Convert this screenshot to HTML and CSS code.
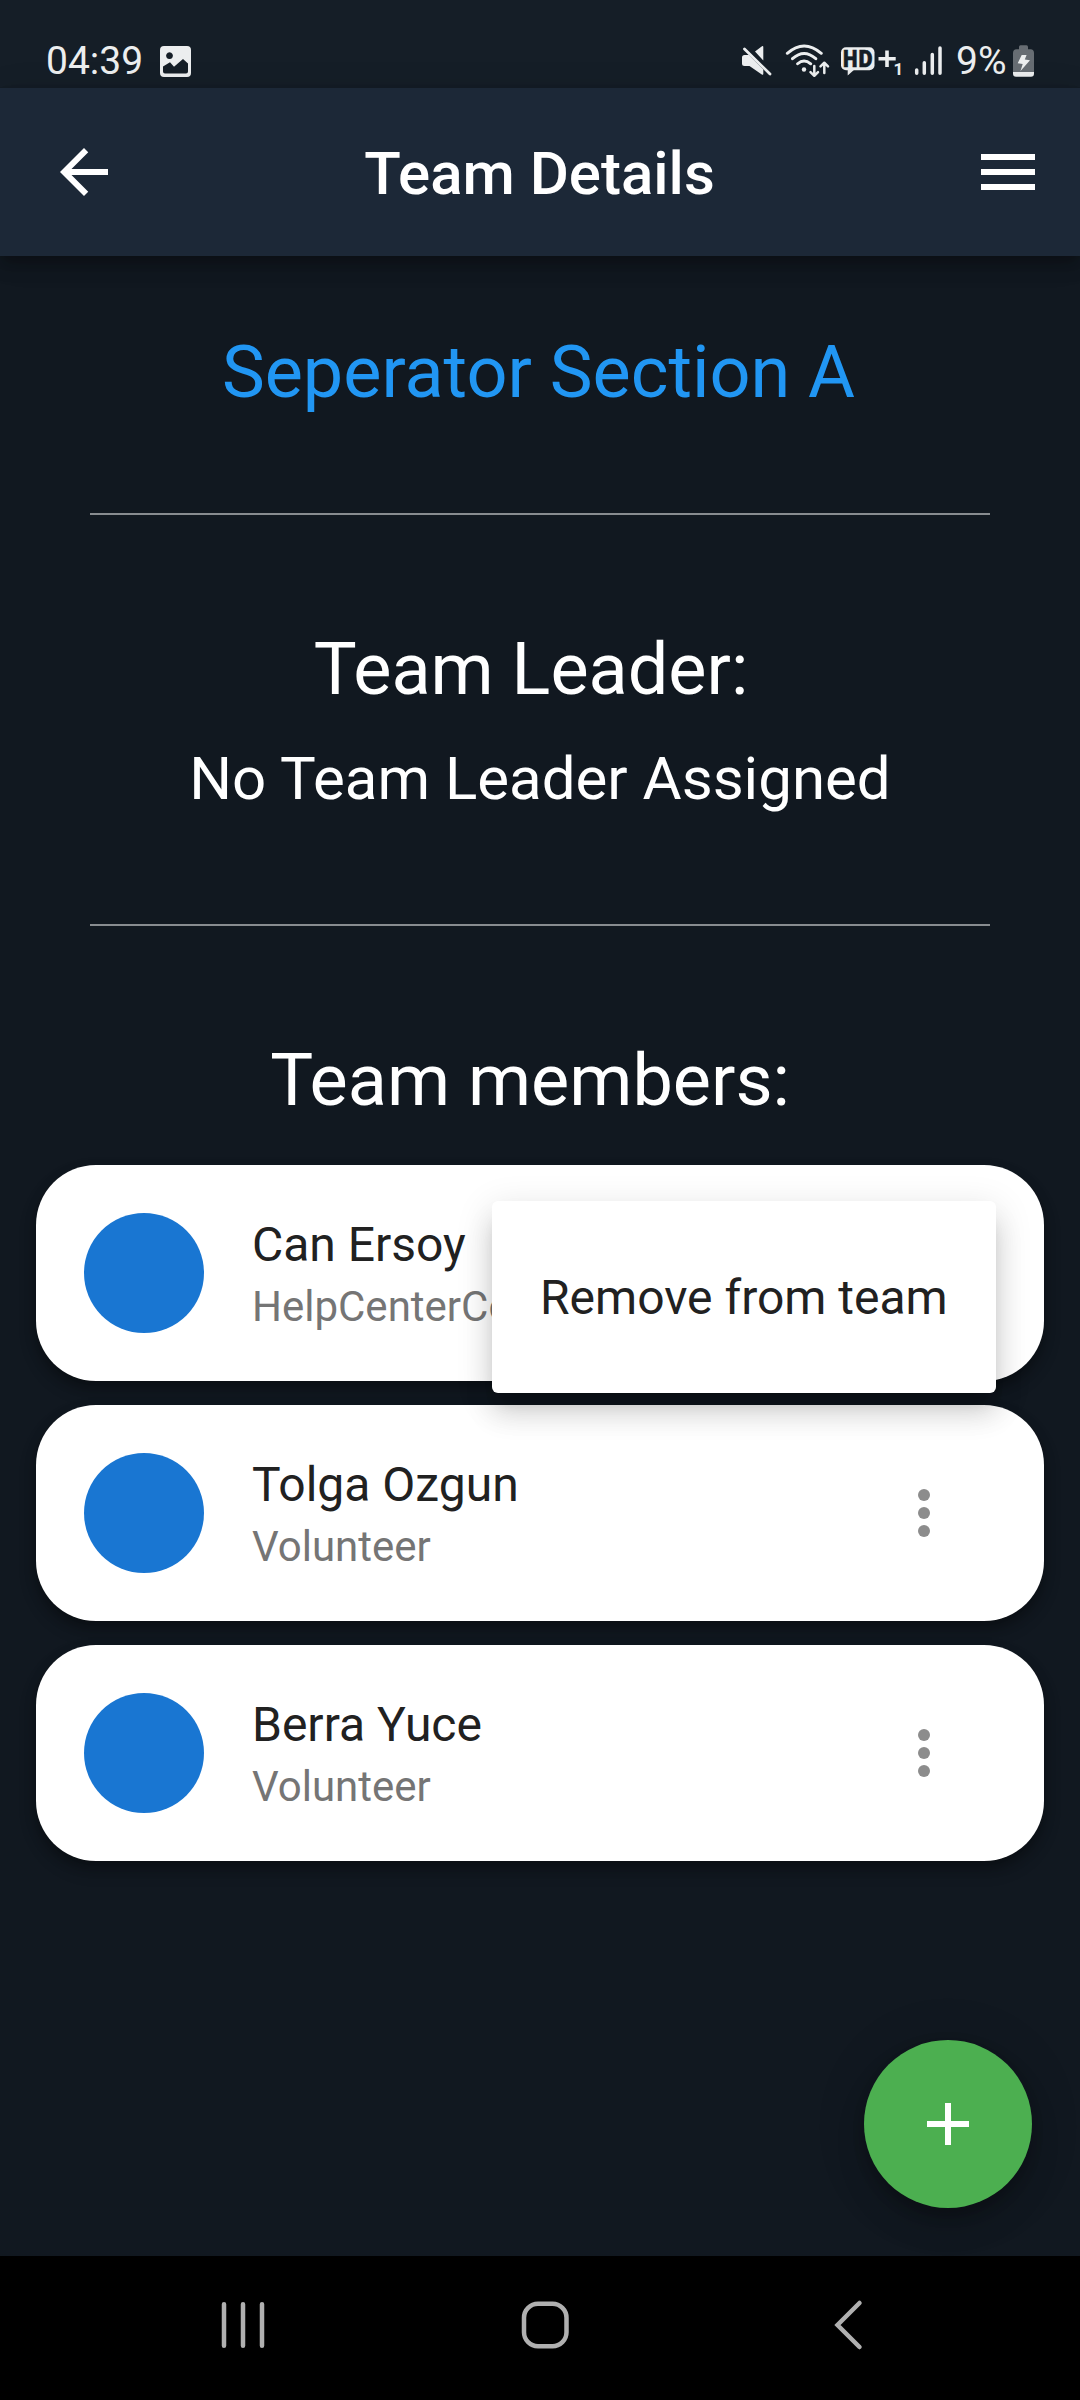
FILE: index.html
```html
<!DOCTYPE html>
<html lang="en">
<head>
<meta charset="utf-8">
<title>Team Details</title>
<link rel="stylesheet" href="styles.css">
</head>
<body>
<div class="screen">
  <div class="status-bar">
    <span class="clock">04:39</span>
    <svg class="picture" width="31" height="36" viewBox="0 0 31 36"><path fill="#eceeef" fill-rule="evenodd" d="M4 4H27a4 4 0 0 1 4 4V31a4 4 0 0 1-4 4H4a4 4 0 0 1-4-4V8a4 4 0 0 1 4-4ZM9.500 10.300a3.400 3.400 0 1 0 .01 0ZM3 24.500L10 20.300L14 24.700L23 17L28 21.500V29.500a2 2 0 0 1-2 2H5a2 2 0 0 1-2-2Z"/></svg>
    <div class="indicators">
      <svg width="34" height="36" viewBox="0 0 34 36"><path fill="#eceeef" d="M15 9.500L22 4.300q1.300-.6 1.300.8V18.500ZM2 15.500q0-2.500 2.500-2.500H8.800L23.300 27.500V31.700q0 1.700-1.500.7L9.500 24H4.500Q2 24 2 21.500Z"/><path stroke="#eceeef" stroke-width="2.800" stroke-linecap="round" d="M4.500 7L30 32"/></svg>
      <svg class="gap" width="46" height="36" viewBox="0 0 46 36" fill="none" stroke="#eceeef" stroke-width="2.900" stroke-linecap="round" stroke-linejoin="round"><path d="M3.300 11.300Q20 -3.500 37.300 11.300M8.500 16.700Q20 6.300 31.800 16.700M13.600 21.800Q20 16 26.700 21.800"/><circle cx="20" cy="27.500" r="2.200" fill="#eceeef" stroke="none"/><path stroke-width="2.500" d="M30.300 24V33.500M26.500 30.200L30.300 33.800L34 30.200M40.300 31V21M36.500 24.300L40.300 20.700L44 24.300"/></svg>
      <svg class="gap" width="62" height="36" viewBox="0 0 62 36"><rect x="1" y="5.300" width="33.500" height="23" rx="5" fill="#eceeef"/><path fill="#eceeef" d="M7.700 27V33.500L15 27ZM38.500 14.900H45.200V8.500H48.800V14.900H55.700V18.500H48.800V25H45.200V18.500H38.500Z"/><text class="hd" x="3" y="25.300" textLength="14.500" lengthAdjust="spacingAndGlyphs">H</text><text class="hd" x="18.500" y="25.300" textLength="14" lengthAdjust="spacingAndGlyphs">D</text><text class="sim" x="53.500" y="33.300">1</text></svg>
      <svg class="gap-wide" width="30" height="36" viewBox="0 0 30 36" stroke="#eceeef" stroke-width="3.500" stroke-linecap="round"><path d="M2.700 28V31.300M10.300 20.700V31.300M18.300 12.400V31.300M26 6V31.300"/></svg>
      <span class="percent">9%</span>
      <svg width="23" height="36" viewBox="0 0 23 36"><path fill="#676d73" d="M8.500 3.300H14.500Q16 3.300 16 5V7.300H18.500Q22 7.500 22 11V30H1V11Q1 7.500 4.500 7.300H7V5Q7 3.300 8.500 3.300Z"/><path fill="#eceeef" d="M1 30H22V31.500Q22 34.700 19 34.700H4Q1 34.700 1 31.500ZM9.700 13L5.700 21.300L10.700 22L8.500 29L18 18.200L12.800 17.500L14.600 13Z"/></svg>
    </div>
  </div>

  <header class="app-bar">
    <svg width="72" height="72" viewBox="0 0 24 24" fill="#fff"><path d="M20 11H7.830l5.590-5.590L12 4l-8 8 8 8 1.410-1.410L7.830 13H20v-2z"/></svg>
    <h1 class="title">Team Details</h1>
    <svg width="72" height="72" viewBox="0 0 24 24" fill="#fff"><path d="M3 18h18v-2H3v2zm0-5h18v-2H3v2zm0-7v2h18V6H3z"/></svg>
  </header>

  <main class="content">
    <h2 class="heading team-name">Seperator Section A</h2>
    <hr class="divider">
    <h2 class="heading">Team Leader:&nbsp;</h2>
    <p class="leader">No Team Leader Assigned</p>
    <hr class="divider">
    <h2 class="heading members-heading">Team members:&nbsp;</h2>

    <div class="members">
      <div class="card">
        <div class="avatar"></div>
        <div class="info"><div class="name">Can Ersoy</div><div class="role">HelpCenterCoordinator</div></div>
        <div class="menu">Remove from team</div>
      </div>
      <div class="card">
        <div class="avatar"></div>
        <div class="info"><div class="name">Tolga Ozgun</div><div class="role">Volunteer</div></div>
        <svg width="72" height="72" viewBox="0 0 24 24" fill="#8c8c8c"><circle cx="12" cy="6" r="2"/><circle cx="12" cy="12" r="2"/><circle cx="12" cy="18" r="2"/></svg>
      </div>
      <div class="card">
        <div class="avatar"></div>
        <div class="info"><div class="name">Berra Yuce</div><div class="role">Volunteer</div></div>
        <svg width="72" height="72" viewBox="0 0 24 24" fill="#8c8c8c"><circle cx="12" cy="6" r="2"/><circle cx="12" cy="12" r="2"/><circle cx="12" cy="18" r="2"/></svg>
      </div>
    </div>

    <div class="fab"><svg width="72" height="72" viewBox="0 0 24 24" fill="#fff"><path d="M19 13h-6v6h-2v-6H5v-2h6V5h2v6h6v2z"/></svg></div>
  </main>

  <nav class="nav-bar">
    <svg width="48" height="52" viewBox="0 0 48 52"><path d="M5 5.300V46.700M24 5.300V46.700M43 5.300V46.700"/></svg>
    <svg class="home" width="52" height="52" viewBox="0 0 52 52"><rect x="5" y="4.700" width="42.500" height="42.600" rx="14"/></svg>
    <svg class="back" width="34" height="52" viewBox="0 0 34 52"><path d="M28.500 4L6.500 26L28.500 48"/></svg>
  </nav>
</div>
</body>
</html>
```

FILE: styles.css
```css
* {
  box-sizing: border-box;
}

body {
  margin: 0;
  background: #111820;
  font-family: Roboto, "Liberation Sans", sans-serif;
}

svg {
  display: block;
  flex: none;
}

.screen {
  display: flex;
  flex-direction: column;
  width: 1080px;
  height: 2400px;
  overflow: hidden;
}

.status-bar {
  display: flex;
  align-items: flex-start;
  height: 88px;
  padding: 42px 45px 0 46px;
  background: #151e27;
  color: #eceeef;
  font-size: 39px;
  line-height: 39px;
}

.clock {
  width: 114px;
}

.indicators {
  display: flex;
  align-items: flex-start;
  margin-left: auto;
}

.gap {
  margin-left: 10px;
}

.gap-wide {
  margin-left: 12px;
}

.percent {
  width: 68px;
  padding-left: 12px;
  white-space: nowrap;
}

.hd {
  font-size: 24.500px;
  font-weight: 900;
  fill: #151e27;
  stroke: #151e27;
  stroke-width: 0.600px;
}

.sim {
  font-size: 17px;
  font-weight: 700;
  fill: #eceeef;
}

.app-bar {
  position: relative;
  display: flex;
  align-items: center;
  height: 168px;
  padding: 0 36px 0 48px;
  background: #1c2837;
  box-shadow: 0 6px 12px -3px rgba(0, 0, 0, 0.200), 0 12px 15px rgba(0, 0, 0, 0.140), 0 3px 30px rgba(0, 0, 0, 0.120);
}

.title {
  flex: 1;
  margin: 3px 13px 0 0;
  color: #fff;
  font-size: 60px;
  font-weight: 500;
  line-height: 70px;
  text-align: center;
}

.content {
  position: relative;
  flex: 1;
  padding-top: 75px;
  color: #fff;
  text-align: center;
}

.heading {
  margin: 0;
  font-size: 72px;
  font-weight: 400;
  line-height: 84px;
}

.team-name {
  padding-right: 3px;
  color: #2196f3;
}

.members-heading {
  padding-right: 2px;
}

.divider {
  height: 2px;
  margin: 98px 90px 113px;
  border: 0;
  background: #888c90;
}

.leader {
  margin: 32px 0 0;
  font-size: 60px;
  line-height: 70px;
}

.leader + .divider {
  margin-top: 110px;
}

.members {
  display: flex;
  flex-direction: column;
  gap: 24px;
  margin: 42px 36px 0;
}

.card {
  position: relative;
  display: flex;
  align-items: center;
  height: 216px;
  padding: 0 84px 0 48px;
  border-radius: 60px;
  background: #fff;
  box-shadow: 0 6px 12px rgba(0, 0, 0, 0.250), 0 9px 18px rgba(0, 0, 0, 0.200);
  text-align: left;
}

.avatar {
  flex: none;
  width: 120px;
  height: 120px;
  border-radius: 50%;
  background: #1976d2;
}

.info {
  flex: 1;
  align-self: flex-start;
  padding: 52px 0 0 48px;
}

.name {
  color: #212121;
  font-size: 48px;
  line-height: 56px;
}

.role {
  margin-top: 9px;
  color: #757575;
  font-size: 42px;
  line-height: 50px;
}

.menu {
  position: absolute;
  top: 36px;
  left: 456px;
  z-index: 2;
  width: 504px;
  height: 192px;
  padding-left: 48px;
  border-radius: 6px;
  background: #fff;
  box-shadow: 0 15px 15px -9px rgba(0, 0, 0, 0.200), 0 22px 28px 1px rgba(0, 0, 0, 0.110), 0 9px 36px 3px rgba(0, 0, 0, 0.110);
  color: #212121;
  font-size: 48px;
  line-height: 193px;
  white-space: nowrap;
}

.fab {
  position: absolute;
  right: 48px;
  bottom: 48px;
  display: grid;
  place-items: center;
  width: 168px;
  height: 168px;
  border-radius: 50%;
  background: #4caf50;
  box-shadow: 0 9px 15px -3px rgba(0, 0, 0, 0.200), 0 18px 30px rgba(0, 0, 0, 0.140), 0 3px 54px rgba(0, 0, 0, 0.120);
}

.nav-bar {
  position: relative;
  display: flex;
  height: 144px;
  padding: 43px 0 0 219px;
  background: #000;
}

.nav-bar svg {
  fill: none;
  stroke: #b0b0b0;
  stroke-width: 4.500px;
  stroke-linecap: round;
}

.home {
  margin-left: 252px;
}

.back {
  margin-left: 260px;
}
```
